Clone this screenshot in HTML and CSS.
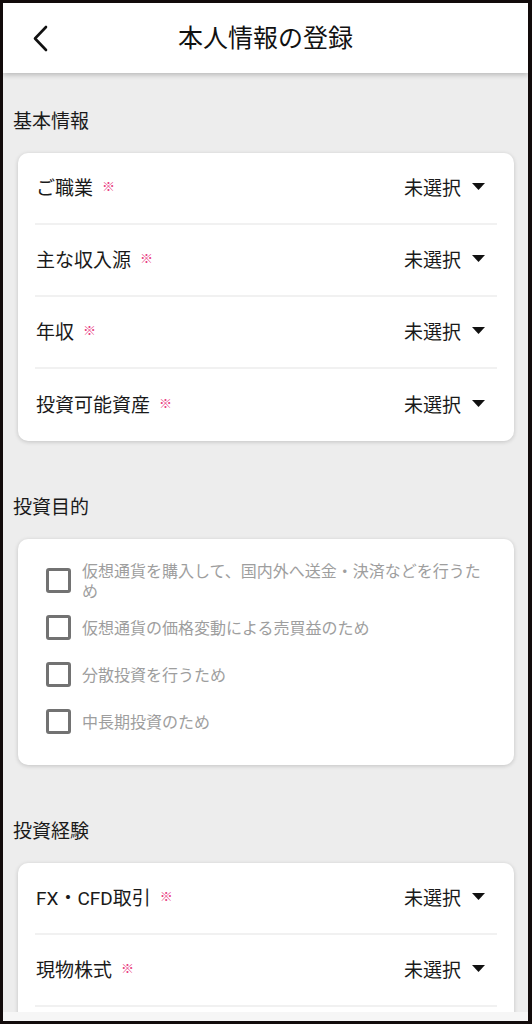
FILE: index.html
```html
<!DOCTYPE html>
<html lang="ja">
<head>
    <meta charset="UTF-8">
    <meta name="viewport" content="width=device-width, initial-scale=1.0">
    <title>本人情報の登録</title>
    <link rel="stylesheet" href="styles.css">
</head>
<body>
    <div class="frame">
        <header class="header">
            <div class="back">
                <svg width="16" height="27" viewBox="0 0 16 27">
                    <polyline points="14,2 3,13.5 14,25" fill="none" stroke="#111" stroke-width="2.6" stroke-linecap="round" stroke-linejoin="round"/>
                </svg>
            </div>
            <h1 class="title">本人情報の登録</h1>
            <div></div>
        </header>

        <main class="content">
            <h2 class="section-label">基本情報</h2>
            <div class="card list">
                <div class="row">
                    <span class="label">ご職業</span><span class="req">※</span>
                    <div class="select">未選択<svg width="13" height="7" viewBox="0 0 13 7"><polygon points="0,0 13,0 6.5,7" fill="#111"/></svg></div>
                </div>
                <div class="row">
                    <span class="label">主な収入源</span><span class="req">※</span>
                    <div class="select">未選択<svg width="13" height="7" viewBox="0 0 13 7"><polygon points="0,0 13,0 6.5,7" fill="#111"/></svg></div>
                </div>
                <div class="row">
                    <span class="label">年収</span><span class="req">※</span>
                    <div class="select">未選択<svg width="13" height="7" viewBox="0 0 13 7"><polygon points="0,0 13,0 6.5,7" fill="#111"/></svg></div>
                </div>
                <div class="row">
                    <span class="label">投資可能資産</span><span class="req">※</span>
                    <div class="select">未選択<svg width="13" height="7" viewBox="0 0 13 7"><polygon points="0,0 13,0 6.5,7" fill="#111"/></svg></div>
                </div>
            </div>

            <h2 class="section-label">投資目的</h2>
            <div class="card checks">
                <label class="check">
                    <span class="box"></span>
                    <span class="check-text">仮想通貨を購入して、国内外へ送金・決済などを行うため</span>
                </label>
                <label class="check">
                    <span class="box"></span>
                    <span class="check-text">仮想通貨の価格変動による売買益のため</span>
                </label>
                <label class="check">
                    <span class="box"></span>
                    <span class="check-text">分散投資を行うため</span>
                </label>
                <label class="check">
                    <span class="box"></span>
                    <span class="check-text">中長期投資のため</span>
                </label>
            </div>

            <h2 class="section-label">投資経験</h2>
            <div class="card list list-open">
                <div class="row">
                    <span class="label">FX・CFD取引</span><span class="req">※</span>
                    <div class="select">未選択<svg width="13" height="7" viewBox="0 0 13 7"><polygon points="0,0 13,0 6.5,7" fill="#111"/></svg></div>
                </div>
                <div class="row">
                    <span class="label">現物株式</span><span class="req">※</span>
                    <div class="select">未選択<svg width="13" height="7" viewBox="0 0 13 7"><polygon points="0,0 13,0 6.5,7" fill="#111"/></svg></div>
                </div>
                <div class="row-spacer"></div>
            </div>
        </main>

        <div class="bottom-bar"></div>
    </div>
</body>
</html>
```

FILE: styles.css
```css
* {
    margin: 0;
    padding: 0;
    box-sizing: border-box;
}

body {
    font-family: 'Roboto', 'Noto Sans CJK JP', sans-serif;
    background-color: #111;
    width: 532px;
    height: 1024px;
    overflow: hidden;
}

.frame {
    height: 1024px;
    border-style: solid;
    border-color: #120b0b;
    border-width: 3px 4px 3px 3px;
    background-color: #ededed;
    display: flex;
    flex-direction: column;
    overflow: hidden;
}

.header {
    height: 70px;
    flex-shrink: 0;
    background-color: #fff;
    display: grid;
    grid-template-columns: 1fr auto 1fr;
    align-items: center;
    box-shadow: 0 2px 5px rgba(0, 0, 0, 0.22);
    position: relative;
    z-index: 1;
}

.back {
    padding-left: 29px;
    display: flex;
    align-items: center;
}

.title {
    font-size: 25px;
    font-weight: 400;
    color: #111;
    line-height: 1;
}

.content {
    flex: 1;
    overflow: hidden;
    padding: 37px 14px 0 15px;
}

.section-label {
    font-size: 19px;
    font-weight: 400;
    line-height: 24px;
    color: #1a1a1a;
    margin-left: -5px;
    margin-bottom: 19px;
}

.card {
    background-color: #fff;
    border-radius: 10px;
    box-shadow: 0 1px 4px rgba(0, 0, 0, 0.18);
    margin-bottom: 55px;
}

.list {
    padding: 0 17px;
}

.row {
    height: 72px;
    display: flex;
    align-items: center;
    border-bottom: 2px solid #f1f1f1;
    padding-left: 1px;
    padding-bottom: 3px;
}

.row:last-child {
    border-bottom: none;
}

.list-open .row:last-of-type {
    border-bottom: 2px solid #f1f1f1;
}

.row-spacer {
    height: 72px;
}

.label {
    font-size: 19px;
    color: #1a1a1a;
}

.req {
    font-size: 13px;
    font-weight: 700;
    color: #e9407f;
    margin-left: 9px;
    margin-top: -2px;
}

.select {
    margin-left: auto;
    display: flex;
    align-items: center;
    font-size: 19px;
    color: #1a1a1a;
    padding-right: 12px;
}

.select svg {
    margin-left: 11px;
}

.checks {
    padding: 19px 18px 19px 28px;
}

.check {
    min-height: 47px;
    display: flex;
    align-items: center;
}

.box {
    width: 25px;
    height: 25px;
    flex-shrink: 0;
    border: 3px solid #727272;
    border-radius: 3px;
    margin-right: 11px;
    margin-top: -2px;
}

.check-text {
    font-size: 16px;
    line-height: 20px;
    color: #9e9e9e;
}

.bottom-bar {
    height: 9px;
    flex-shrink: 0;
    background-color: #f6f6f6;
}
```
